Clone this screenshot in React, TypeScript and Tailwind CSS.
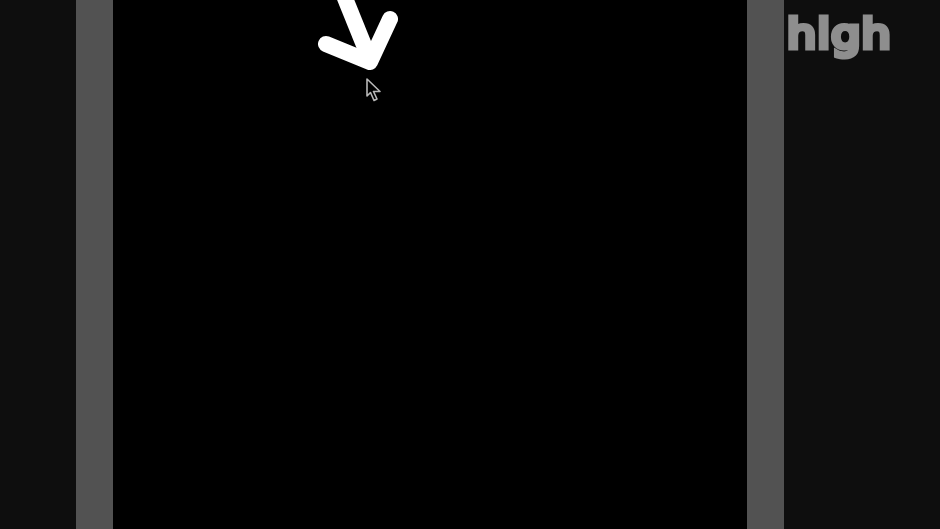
export default function App() {
  return (
    <div className="relative flex h-[529px] w-[940px] overflow-hidden bg-black">
      <div className="w-[76px] bg-[#0e0e0e]" />
      <div className="w-[37px] bg-[#525252]" />
      <div className="flex-1 bg-black" />
      <div className="w-[37px] bg-[#525252]" />
      <div className="w-[156px] bg-[#0e0e0e] pl-[3px]">
        <div
          className="mt-[9px] origin-left scale-x-[1.15] text-[40px] leading-[50px] font-normal tracking-[1px] text-[#8e8e8e] blur-[0.6px] [-webkit-text-stroke:5px_#8e8e8e] [font-family:'DejaVu_Sans',sans-serif]"
        >
          high
        </div>
      </div>
      <svg className="absolute top-0 left-[300px] blur-[0.6px]" width="110" height="110" viewBox="0 0 110 110" fill="none">
        <path d="M42.5 -8L70 60" stroke="#ffffff" strokeWidth="16" strokeLinecap="butt" />
        <path d="M26 44L70 62L90 19" stroke="#ffffff" strokeWidth="16" strokeLinecap="round" strokeLinejoin="round" />
      </svg>
      <svg className="absolute top-[75px] left-[360px] blur-[0.3px]" width="26" height="30" viewBox="0 0 26 30" fill="none">
        <path d="M7 4V21L10.5 17.5L14 25.5L17 24L13.5 16.5H20Z" fill="#000000" stroke="#b8b8b8" strokeWidth="1.6" strokeLinejoin="round" />
      </svg>
    </div>
  );
}
